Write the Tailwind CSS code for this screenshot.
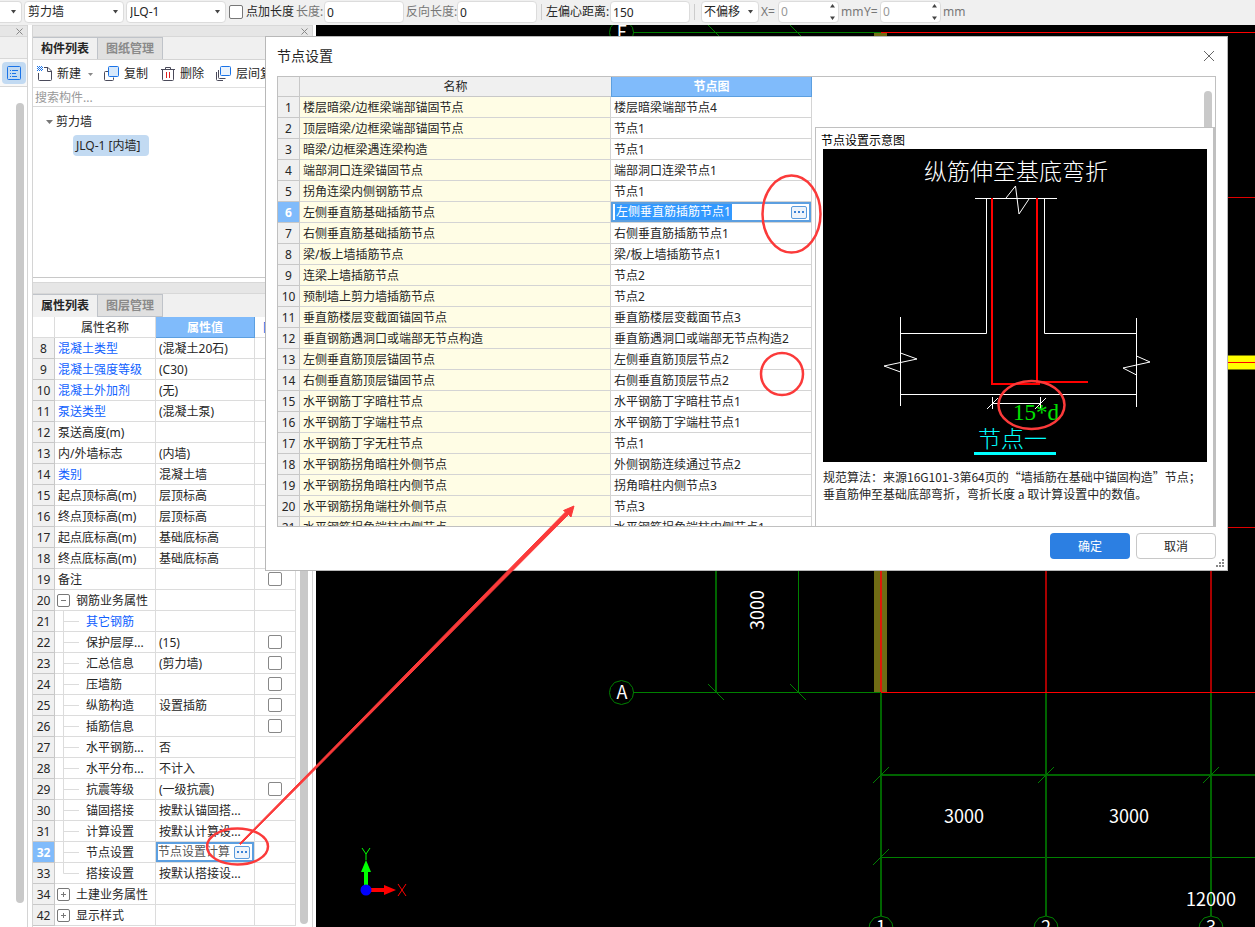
<!DOCTYPE html>
<html lang="zh-CN">
<head>
    <meta charset="UTF-8">
    <meta name="viewport" content="width=device-width, initial-scale=1.0">
    <script src="https://cdn.jsdelivr.net/npm/@tailwindcss/browser@4"></script>
    <title>节点设置</title>
</head>
<body class="relative h-screen overflow-hidden flex flex-col bg-white text-[#262626] text-xs font-['Noto_Sans','Noto_Sans_CJK_SC',sans-serif]">

    <!-- top toolbar -->
    <header class="h-[25px] shrink-0 flex items-center bg-[#f0f0f0] whitespace-nowrap overflow-hidden pb-px">
        <div class="relative w-[22px] h-[22px] bg-white border border-l-0 border-[#dcdcdc] rounded-r">
            <select aria-label="楼层" class="w-full h-full appearance-none"></select>
            <svg class="absolute right-[5px] top-2 pointer-events-none" width="5" height="4"><path d="M0 0h5L2.5 3.5z" fill="#444"/></svg>
        </div>
        <div class="relative ml-0.5 w-[100px] h-[22px] bg-white border border-[#dcdcdc] rounded">
            <select aria-label="构件类型" class="w-full h-full appearance-none pl-[3px]"><option>剪力墙</option></select>
            <svg class="absolute right-[5px] top-2 pointer-events-none" width="5" height="4"><path d="M0 0h5L2.5 3.5z" fill="#444"/></svg>
        </div>
        <div class="relative ml-0.5 w-[100px] h-[22px] bg-white border border-[#dcdcdc] rounded">
            <select aria-label="构件" class="w-full h-full appearance-none pl-[3px]"><option>JLQ-1</option></select>
            <svg class="absolute right-[5px] top-2 pointer-events-none" width="5" height="4"><path d="M0 0h5L2.5 3.5z" fill="#444"/></svg>
        </div>
        <input id="addLen" type="checkbox" class="ml-[3px] size-3.5 appearance-none bg-white border border-[#777] rounded-xs">
        <label for="addLen" class="ml-[3px]">点加长度</label>
        <label for="len" class="ml-0.5 w-7 text-[#777]">长度:</label>
        <input id="len" value="0" class="w-20 h-[22px] px-0.5 bg-white border border-[#dcdcdc] rounded">
        <label for="revLen" class="ml-0.5 w-[51px] text-[#777]">反向长度:</label>
        <input id="revLen" value="0" class="w-20 h-[22px] px-0.5 bg-white border border-[#dcdcdc] rounded">
        <div class="mx-1 w-px h-4 bg-[#ccc]"></div>
        <label for="offset" class="w-16">左偏心距离:</label>
        <input id="offset" value="150" class="w-20 h-[22px] px-0.5 bg-white border border-[#dcdcdc] rounded">
        <div class="mx-1 w-px h-4 bg-[#ccc]"></div>
        <div class="relative ml-0.5 w-[58px] h-[22px] bg-white border border-[#dcdcdc] rounded">
            <select aria-label="偏移" class="w-full h-full appearance-none pl-0.5"><option>不偏移</option></select>
            <svg class="absolute right-[5px] top-2 pointer-events-none" width="5" height="4"><path d="M0 0h5L2.5 3.5z" fill="#444"/></svg>
        </div>
        <label for="dx" class="ml-0.5 w-[17px] text-[#777]">X=</label>
        <div class="flex items-center w-[61px] h-[22px] px-0.5 bg-white border border-[#dcdcdc] rounded text-[#999]">
            <input id="dx" value="0" class="w-full min-w-0">
            <svg class="shrink-0" width="7" height="18"><path d="M1 4.5h5L3.5 1zM1 13.500h5L3.5 17z" fill="#444"/></svg>
        </div>
        <span class="ml-0.5 w-[23px] text-[#777]">mm</span>
        <label for="dy" class="w-4 text-[#777]">Y=</label>
        <div class="flex items-center w-[61px] h-[22px] px-0.5 bg-white border border-[#dcdcdc] rounded text-[#999]">
            <input id="dy" value="0" class="w-full min-w-0">
            <svg class="shrink-0" width="7" height="18"><path d="M1 4.5h5L3.5 1zM1 13.500h5L3.5 17z" fill="#444"/></svg>
        </div>
        <span class="ml-0.5 text-[#777]">mm</span>
    </header>

    <div class="flex-1 min-h-0 flex">
        <!-- left rail -->
        <nav class="w-7 shrink-0 flex flex-col border-r border-[#d4d4d4]">
            <div class="h-3 flex items-center justify-end pr-1 bg-[#e6e6e6] border-y border-[#d8d8d8]">
                <svg width="7" height="7"><path d="M.5.5l6 6M6.500.5l-6 6" stroke="#888"/></svg>
            </div>
            <div class="h-[22px] bg-[#f0f0f0] border-b border-[#d8d8d8]"></div>
            <div class="h-7 pt-[3px] pl-0.5 bg-[#f8f8f8] border-b border-[#d8d8d8]">
                <button aria-label="列表" class="w-6 h-[22px] flex items-center justify-center rounded bg-[#c2daf2]">
                    <svg width="16" height="16" fill="none" stroke="#1a73e8"><rect x="1.500" y="1.500" width="13" height="13" rx="1"/><path d="M4 5.500h1M6 5.500h6M4 8.500h1M6 8.500h4M4 11.500h1M6 11.500h5"/></svg>
                </button>
            </div>
            <div class="flex-1 flex justify-end pt-4 pb-6 pr-[3px]">
                <div class="w-2 rounded-full bg-[#c9c9c9]"></div>
            </div>
        </nav>

        <!-- component list and properties -->
        <aside class="ml-1 w-[281px] shrink-0 flex flex-col border-x border-[#d4d4d4]">
            <div class="h-3 shrink-0 flex items-center justify-end pr-1 bg-[#e6e6e6] border-y border-[#d8d8d8]">
                <svg width="7" height="7"><path d="M.5.5l6 6M6.500.5l-6 6" stroke="#888"/></svg>
            </div>
            <div class="h-[23px] shrink-0 flex bg-[#f0f0f0] border-b border-[#d4d4d4]">
                <button class="w-[65px] border-r border-t border-[#bfc3c9] font-bold">构件列表</button>
                <button class="w-[65px] border-r border-t border-[#bfc3c9] bg-[#e0e0e0] font-bold text-[#8a8a8a]">图纸管理</button>
            </div>
            <div class="h-7 shrink-0 flex items-center overflow-hidden whitespace-nowrap pt-px border-b border-[#e0e0e0]">
                <button class="flex items-center ml-1">
                    <svg width="16" height="16" fill="none" stroke="#4a4a5a"><path d="M7 1.500h4l3.500 3.500v8.500a1 1 0 0 1-1 1h-11a1 1 0 0 1-1-1V7M10.500 1.500v4h4"/><path d="M0 .5h6M1 1.500h5M0 2.500h6M1 3.500h5M0 4.500h6" stroke="#1a73e8" stroke-dasharray="1 1"/></svg>
                    <span class="ml-1">新建</span>
                    <svg class="ml-[7px]" width="5" height="3"><path d="M0 0h5L2.500 3z" fill="#888"/></svg>
                </button>
                <button class="flex items-center ml-[11px]">
                    <svg width="16" height="16" fill="none" stroke="#4a4a5a"><path d="M4.500 5.500H1.500a1 1 0 0 0-1 1v7a1 1 0 0 0 1 1h7a1 1 0 0 0 1-1v-2"/><rect x="4.500" y=".5" width="10" height="10" rx="1" fill="#d6e8fb" stroke="#1a73e8"/></svg>
                    <span class="ml-1">复制</span>
                </button>
                <button class="flex items-center ml-3">
                    <svg width="16" height="16" fill="none" stroke="#4a4a5a"><path d="M1 3.500h14M5.500 3V1.500h5V3M2.500 4v9.500a1 1 0 0 0 1 1h9a1 1 0 0 0 1-1V4"/><path d="M6.500 6v6M9.500 6v6" stroke="#e02020"/></svg>
                    <span class="ml-1">删除</span>
                </button>
                <button class="flex items-center ml-3">
                    <svg width="16" height="16" fill="none" stroke="#4a4a5a"><path d="M.5 6v7.500a1 1 0 0 0 1 1H7M2.500 4v7.500a1 1 0 0 0 1 1h6" /><rect x="4.500" y=".5" width="10" height="9" rx="1" fill="#eaf3fd" stroke="#1a73e8"/></svg>
                    <span class="ml-1">层间复制</span>
                </button>
            </div>
            <input aria-label="搜索构件" placeholder="搜索构件..." class="h-[19px] shrink-0 px-0.5 border-b border-[#d8d8d8] placeholder:text-[#999]">
            <div class="h-[171px] shrink-0 pt-[5px] border-b border-[#c8c8c8]">
                <div class="flex items-center h-5 pl-[13px]">
                    <svg width="7" height="4"><path d="M0 0h7L3.500 4z" fill="#777"/></svg>
                    <span class="ml-[3px]">剪力墙</span>
                </div>
                <div class="pl-10 pt-[3px]"><span class="block w-[76px] h-[21px] leading-[22px] pl-[3px] whitespace-nowrap rounded bg-[#c2daf2]">JLQ-1 [内墙]</span></div>
            </div>
            <div class="mt-1 h-3 shrink-0 bg-[#e6e6e6] border-y border-[#d8d8d8]"></div>
            <div class="h-[23px] shrink-0 flex bg-[#f0f0f0]">
                <button class="w-[65px] border-r border-t border-[#bfc3c9] font-bold">属性列表</button>
                <button class="w-[65px] border-r border-y border-[#bfc3c9] bg-[#e0e0e0] font-bold text-[#8a8a8a]">图层管理</button>
            </div>
            <div class="flex flex-1 min-h-0">
                <table class="w-[263px] self-start table-fixed border-separate border-spacing-0 leading-[18px]">
                    <thead>
                        <tr>
                            <th class="w-[22px] h-[21px] p-0 border-r border-b border-[#dcdcdc]"></th>
                            <th class="w-[101px] p-0 pt-0.5 border-r border-b border-[#dcdcdc] font-normal">属性名称</th>
                            <th class="w-[99px] p-0 pt-0.5 border-r border-b border-[#5c9fe0] bg-[#80bbfb] text-white">属性值</th>
                            <th class="w-[41px] p-0 pt-0.5 border-r border-b border-[#dcdcdc] font-normal text-[#1060e0]">附加</th>
                        </tr>
                    </thead>
                    <tbody id="props"></tbody>
                </table>
                <div class="flex-1 flex justify-end pb-[3px] pr-1"><div class="w-2 rounded-full bg-[#c9c9c9]"></div></div>
            </div>
        </aside>

        <!-- drawing canvas -->
        <main class="ml-[3px] flex-1 min-w-0 bg-black">
            <svg class="block w-full h-full font-['Noto_Sans_CJK_SC',sans-serif]" fill="none">
                <defs>
                    <path id="bubble" d="M0-12L7-10L11-5L12 0L11 5L7 10L0 12L-7 10L-11 5L-12 0L-11-5L-7-10Z"/>
                </defs>
                <g transform="translate(-316 -25)">
                    <g fill="#6f6b14"><rect x="874" y="571" width="13" height="121"/><rect x="874" y="32" width="13" height="10"/></g>
                    <g stroke="#008000">
                        <path d="M633 32.500H881M633 692.500H881M798.500 571V692M881 857.500H1255"/>
                        <path d="M716 571V692M881 692V916M1046 692V916M1211 692V916M881 775H1255" stroke="#006400" stroke-width="2"/>
                        <path d="M708 25L724 41M790 25L806 41M708 684L724 700M790 684L806 700M873 783L889 767M1038 783L1054 767M1203 783L1219 767M873 865L889 849"/>
                        <use href="#bubble" x="621.500" y="32.500"/>
                        <use href="#bubble" x="621.500" y="692.500"/>
                        <use href="#bubble" x="881" y="928"/>
                        <use href="#bubble" x="1046" y="928"/>
                        <use href="#bubble" x="1211" y="928"/>
                    </g>
                    <g stroke="#ff0000">
                        <path d="M881 32.500H1255M881 692.500H1255"/>
                        <path d="M881 571V692" stroke="#e01808" stroke-width="2"/>
                        <path d="M1046 571V692M1211 571V692" stroke="#a80000" stroke-width="2"/>
                        <path d="M1228 197.500H1255M1228 527.500H1255" stroke="#e00000"/>
                    </g>
                    <path d="M1228 362.500H1255" stroke="#ffff00" stroke-width="14"/>
                    <path d="M1228 362.500H1255" stroke="#ff0000"/>
                    <g class="text-lg" fill="#fff" text-anchor="middle">
                        <text x="622" y="39">E</text>
                        <text x="622" y="699">A</text>
                        <text x="881" y="934">1</text>
                        <text x="1046" y="934">2</text>
                        <text x="1211" y="934">3</text>
                        <text x="964" y="823">3000</text>
                        <text x="1129" y="823">3000</text>
                        <text x="1211" y="906">12000</text>
                        <text transform="translate(764 610) rotate(-90)">3000</text>
                    </g>
                    <path d="M366 890V871" stroke="#00ff00" stroke-width="4"/>
                    <path d="M366 860L371 872H361Z" fill="#00ff00"/>
                    <path d="M362 848L366 854L370 848M366 854V860" stroke="#00ff00"/>
                    <path d="M370 890H385" stroke="#ff0000" stroke-width="4"/>
                    <path d="M396 890L384 895V885Z" fill="#ff0000"/>
                    <path d="M398 884L406 896M406 884L398 896" stroke="#ff0000"/>
                    <circle cx="366" cy="890" r="5.500" fill="#0000ff"/>
                </g>
            </svg>
        </main>
    </div>

    <!-- node settings dialog -->
    <section role="dialog" aria-labelledby="dlgTitle" class="absolute left-[265px] top-9 w-[963px] flex flex-col bg-white border border-[#b8b8b8]">
        <div class="h-[39px] flex items-center justify-between pl-[11px] pr-3 pb-0.5">
            <h1 id="dlgTitle" class="text-sm">节点设置</h1>
            <button aria-label="关闭"><svg width="12" height="12"><path d="M1 1l10 10M11 1L1 11" stroke="#666"/></svg></button>
        </div>
        <div class="ml-[11px] mr-[11px] h-[451px] flex overflow-hidden border border-[#c0c0c0]">
            <div class="w-[534px] shrink-0">
                <table class="w-full table-fixed border-separate border-spacing-0 leading-[18px]">
                    <thead>
                        <tr>
                            <th class="w-[22px] h-5 p-0 border-r border-b border-[#c8c8c8] bg-[#f0f0f0]"></th>
                            <th class="w-[311px] p-0 pt-px border-b border-[#c8c8c8] bg-[#f0f0f0] font-normal">名称</th>
                            <th class="p-0 pt-px border border-t-0 border-[#5c9fe0] bg-[#80bbfb] text-white">节点图</th>
                        </tr>
                    </thead>
                    <tbody id="nodes"></tbody>
                </table>
            </div>
            <div class="flex-1 flex flex-col pl-[3px]">
                <div class="h-[50px] shrink-0 flex justify-end items-end pr-[3px]"><div class="w-2 h-9 rounded-t-full bg-[#c9c9c9]"></div></div>
                <figure class="flex-1 pl-[7px] pr-1.5 pt-[5px] border-l border-t border-r-2 border-[#c0c0c0]">
                    <figcaption class="h-4 leading-4 -ml-0.5 text-black">节点设置示意图</figcaption>
                    <svg class="block w-full font-['Noto_Sans_CJK_SC',sans-serif] font-light" viewBox="823 149 384 313" fill="none" stroke="#fff">
                        <rect x="823" y="149" width="384" height="313" fill="#000" stroke="none"/>
                        <path d="M975 198.500H1057M986.500 198V333.500H900M1044.500 198V333.500H1136M900.500 317V406M1136.500 318V407M900 394.500H1136M992 403.500H1040M992.500 397V409M1040.500 397V409M987 409L998 398M1035 409L1046 398"/>
                        <path d="M1006 198L1015.500 186L1019 214L1029 199M900.500 353L917 359L884 366L900.500 372M1136.500 356L1150 362L1123 368L1136.500 375"/>
                        <path d="M992 198V384H1040M1037 198V382H1088" stroke="#ff0000" stroke-width="2"/>
                        <path d="M974 453.500H1056" stroke="#00ffff" stroke-width="3"/>
                        <g stroke="none" class="text-[23px]">
                            <text x="924" y="180" fill="#fff">纵筋伸至基底弯折</text>
                            <text x="1013" y="420" fill="#00e000" class="font-['Liberation_Serif',serif]">15*d</text>
                            <text x="978" y="447" fill="#00ffff">节点一</text>
                        </g>
                    </svg>
                    <p class="mt-1.5 leading-[17px] whitespace-nowrap font-['Noto_Sans_CJK_SC',sans-serif]">规范算法：来源16G101-3第64页的“墙插筋在基础中锚固构造”节点；<br>垂直筋伸至基础底部弯折，弯折长度 a 取计算设置中的数值。</p>
                </figure>
            </div>
        </div>
        <div class="h-[43px] flex justify-end gap-1.5 pt-1.5 pr-[11px]">
            <button class="w-20 h-[26px] pt-0.5 rounded bg-[#2c7fe2] text-white">确定</button>
            <button class="w-20 h-[26px] pt-0.5 rounded border border-[#c8c8c8]">取消</button>
        </div>
        <svg class="absolute right-0.5 bottom-0.5" width="9" height="9" fill="#888"><path d="M6 0h2v2h-2zM3 3h2v2h-2zM6 3h2v2h-2zM0 6h2v2h-2zM3 6h2v2h-2zM6 6h2v2h-2z"/></svg>
    </section>

    <!-- red callouts over everything -->
    <svg class="absolute inset-0 w-full h-full pointer-events-none" fill="none" stroke="#fb3a3a" stroke-width="2.500">
        <ellipse cx="791.500" cy="214" rx="29" ry="38.500"/>
        <circle cx="782" cy="374" r="21"/>
        <ellipse cx="1031.500" cy="405" rx="33" ry="24"/>
        <ellipse cx="237.500" cy="846.500" rx="30.500" ry="18"/>
        <path d="M239.500 843.500L565.500 512L563.500 510.500L574 506L571 517L568.500 514.500L240.500 844.500Z" fill="#fb3a3a" stroke-width="1"/>
    </svg>

    <script>
        const dots = '<svg width="16" height="13" fill="#eef4fb" stroke="#5b9bdc"><rect x=".5" y=".5" width="15" height="12" rx="1.500"/><path d="M3 5h2v2H3zM7 5h2v2H7zM11 5h2v2h-2z" fill="#3b82d6" stroke="none"/></svg>';

        // [no, name, value, has checkbox, kind]
        const props = [
            [8, '混凝土类型', '(混凝土20石)', 1, 'link'],
            [9, '混凝土强度等级', '(C30)', 1, 'link'],
            [10, '混凝土外加剂', '(无)', 0, 'link'],
            [11, '泵送类型', '(混凝土泵)', 0, 'link'],
            [12, '泵送高度(m)', '', 0],
            [13, '内/外墙标志', '(内墙)', 1],
            [14, '类别', '混凝土墙', 1, 'link'],
            [15, '起点顶标高(m)', '层顶标高', 1],
            [16, '终点顶标高(m)', '层顶标高', 1],
            [17, '起点底标高(m)', '基础底标高', 1],
            [18, '终点底标高(m)', '基础底标高', 1],
            [19, '备注', '', 1],
            [20, '钢筋业务属性', '', 0, 'open'],
            [21, '其它钢筋', '', 0, 'childlink'],
            [22, '保护层厚...', '(15)', 1, 'child'],
            [23, '汇总信息', '(剪力墙)', 1, 'child'],
            [24, '压墙筋', '', 1, 'child'],
            [25, '纵筋构造', '设置插筋', 1, 'child'],
            [26, '插筋信息', '', 1, 'child'],
            [27, '水平钢筋...', '否', 0, 'child'],
            [28, '水平分布...', '不计入', 0, 'child'],
            [29, '抗震等级', '(一级抗震)', 1, 'child'],
            [30, '锚固搭接', '按默认锚固搭...', 0, 'child'],
            [31, '计算设置', '按默认计算设...', 0, 'child'],
            [32, '节点设置', '节点设置计算', 0, 'child'],
            [33, '搭接设置', '按默认搭接设...', 0, 'last'],
            [34, '土建业务属性', '', 0, 'closed'],
            [42, '显示样式', '', 0, 'closed']
        ];

        const propName = (name, kind) => {
            if (kind === 'open' || kind === 'closed') {
                const mark = kind === 'open' ? 'M4 6.500h5' : 'M4 6.500h5M6.500 4v5';
                return `<div class="flex items-center h-5 pl-0.5"><svg width="13" height="13" fill="none" stroke="#777"><rect x=".5" y=".5" width="12" height="12" rx="1.500"/><path d="${mark}"/></svg><span class="ml-1.5 pt-0.5">${name}</span></div>`;
            }
            if (kind === 'child' || kind === 'childlink' || kind === 'last') {
                const line = kind === 'last' ? 'M8.500 0v10.500H24' : 'M8.500 0v21M8.500 10.500H24';
                return `<div class="flex h-5"><svg class="w-[31px] h-5 shrink-0" fill="none" stroke="#dcdcdc"><path d="${line}"/></svg><span class="pt-0.5 ${kind === 'childlink' ? 'text-[#0f5fff]' : ''}">${name}</span></div>`;
            }
            return `<div class="pl-[3px] pt-0.5 ${kind === 'link' ? 'text-[#0f5fff]' : ''}">${name}</div>`;
        };

        document.getElementById('props').innerHTML = props.map(([no, name, value, check, kind]) => {
            const active = no === 32;
            return `
            <tr>
                <td class="h-[21px] p-0 pt-0.5 text-center border-r border-b border-[#c8c8c8] ${active ? 'bg-[#80bbfb] text-white font-bold' : 'bg-[#f0f0f0]'}">${no}</td>
                <td class="p-0 border-r border-b border-[#dcdcdc] whitespace-nowrap overflow-hidden">${propName(name, kind)}</td>
                <td class="p-0 border-r border-b border-[#dcdcdc] whitespace-nowrap overflow-hidden">${active
                    ? `<div class="flex items-center justify-between h-5 pl-0.5 pr-1 outline-2 -outline-offset-2 outline-[#5c9fe0]"><input aria-label="${name}" value="${value}" class="w-[74px] text-[#555]"><button aria-label="更多">${dots}</button></div>`
                    : `<div class="pl-[3px] pt-0.5">${value}</div>`}</td>
                <td class="p-0 border-r border-b border-[#dcdcdc]">${check ? `<input type="checkbox" aria-label="${name}" class="block mx-auto size-3.5 appearance-none border border-[#888] rounded-xs">` : ''}</td>
            </tr>`;
        }).join('');

        const nodes = [
            ['楼层暗梁/边框梁端部锚固节点', '楼层暗梁端部节点4'],
            ['顶层暗梁/边框梁端部锚固节点', '节点1'],
            ['暗梁/边框梁遇连梁构造', '节点1'],
            ['端部洞口连梁锚固节点', '端部洞口连梁节点1'],
            ['拐角连梁内侧钢筋节点', '节点1'],
            ['左侧垂直筋基础插筋节点', '左侧垂直筋插筋节点1'],
            ['右侧垂直筋基础插筋节点', '右侧垂直筋插筋节点1'],
            ['梁/板上墙插筋节点', '梁/板上墙插筋节点1'],
            ['连梁上墙插筋节点', '节点2'],
            ['预制墙上剪力墙插筋节点', '节点2'],
            ['垂直筋楼层变截面锚固节点', '垂直筋楼层变截面节点3'],
            ['垂直钢筋遇洞口或端部无节点构造', '垂直筋遇洞口或端部无节点构造2'],
            ['左侧垂直筋顶层锚固节点', '左侧垂直筋顶层节点2'],
            ['右侧垂直筋顶层锚固节点', '右侧垂直筋顶层节点2'],
            ['水平钢筋丁字暗柱节点', '水平钢筋丁字暗柱节点1'],
            ['水平钢筋丁字端柱节点', '水平钢筋丁字端柱节点1'],
            ['水平钢筋丁字无柱节点', '节点1'],
            ['水平钢筋拐角暗柱外侧节点', '外侧钢筋连续通过节点2'],
            ['水平钢筋拐角暗柱内侧节点', '拐角暗柱内侧节点3'],
            ['水平钢筋拐角端柱外侧节点', '节点3'],
            ['水平钢筋拐角端柱内侧节点', '水平钢筋拐角端柱内侧节点1']
        ];

        document.getElementById('nodes').innerHTML = nodes.map(([name, value], i) => {
            const active = i === 5;
            return `
            <tr>
                <td class="h-[21px] p-0 pt-0.5 text-center border-r border-b border-[#c8c8c8] ${active ? 'bg-[#80bbfb] text-white font-bold' : 'bg-[#f0f0f0]'}">${i + 1}</td>
                <td class="p-0 pt-0.5 pl-[3px] border-r border-b border-[#d4d4d4] bg-[#fffde5] whitespace-nowrap">${name}</td>
                <td class="p-0 border-r border-b border-[#d4d4d4] whitespace-nowrap">${active
                    ? `<div class="flex items-center justify-between h-5 pl-1 pr-1 outline-2 -outline-offset-2 outline-[#5c9fe0]"><input aria-label="${name}" value="${value}" class="w-[117px] h-4 pl-px bg-[#3399ff] text-white"><button aria-label="更多">${dots}</button></div>`
                    : `<div class="pl-[3px] pt-0.5">${value}</div>`}</td>
            </tr>`;
        }).join('');
    </script>
</body>
</html>
